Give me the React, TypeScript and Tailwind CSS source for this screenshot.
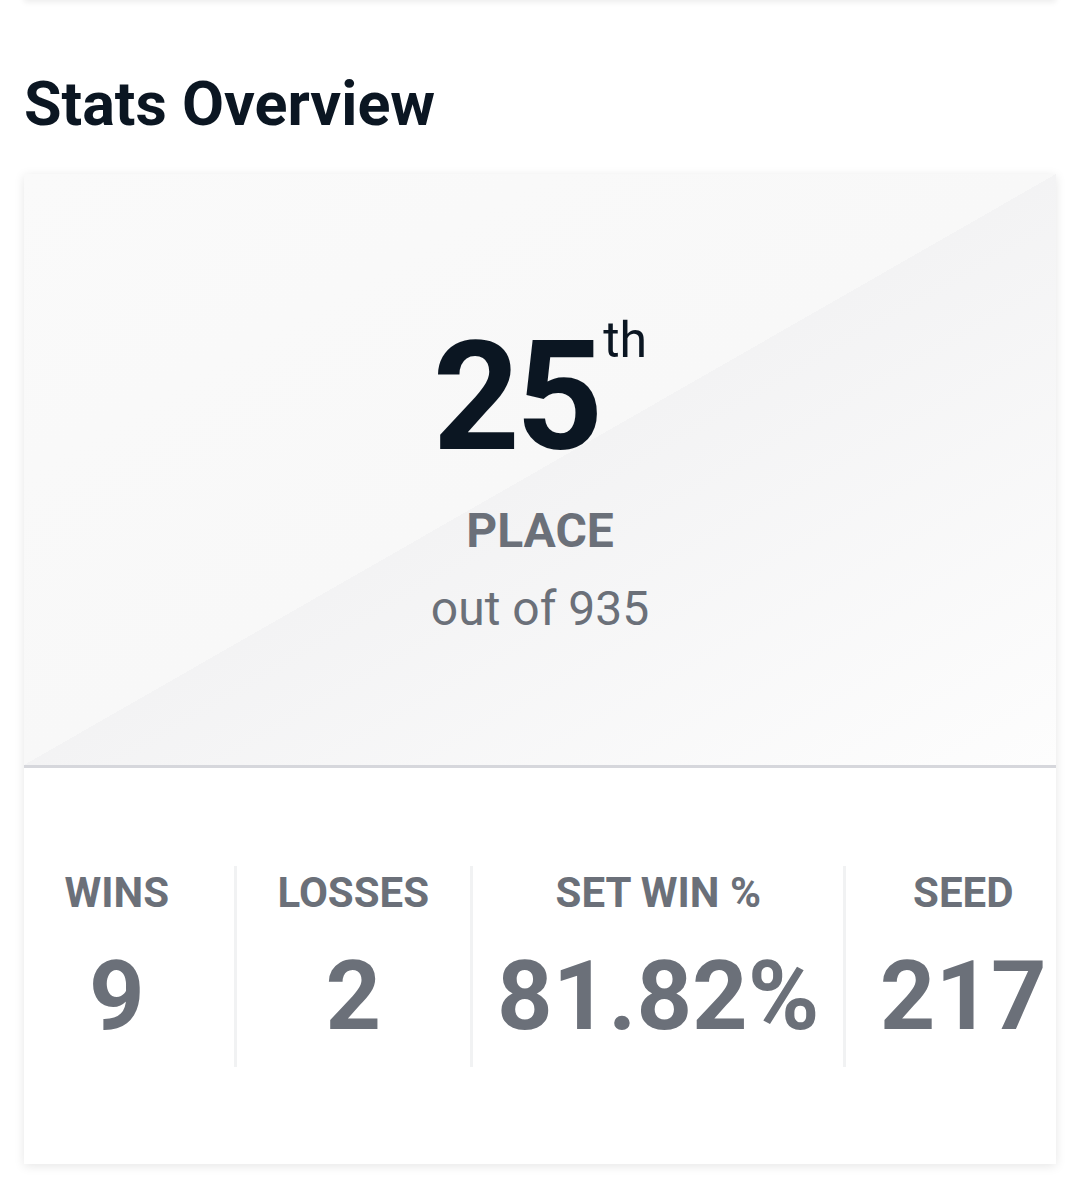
import React from "react";

const stats = [
  { label: "WINS", value: "9" },
  { label: "LOSSES", value: "2" },
  { label: "SET WIN %", value: "81.82%" },
  { label: "SEED", value: "217" },
];

export default function App() {
  return (
    <div className="min-h-[1195px] bg-white px-6 pb-[30px] font-['Roboto',sans-serif]">
      <div className="-mt-[40px] h-[40px] bg-white shadow-[0_2px_6px_rgba(0,0,0,0.08)]" />
      <h2 className="mt-[68px] text-[61px] font-bold leading-[1.2] text-[#0b1622]">
        Stats Overview
      </h2>
      <div className="mt-[33px] bg-white shadow-[0_2px_10px_rgba(0,0,0,0.1)]">
        <div className="flex h-[594px] flex-col items-center justify-center border-b-[3px] border-[#d6d7dc] bg-[linear-gradient(to_bottom_right,#fafafa_0%,#f8f8f8_50%,#f3f3f4_50%,#fdfdfd_100%)]">
          <div className="flex items-start pt-[14px]">
            <span className="text-[152px] font-bold leading-none tracking-[-4px] text-[#0b1622]">25</span>
            <span className="mt-[-6px] ml-[4px] text-[50px] leading-none text-[#0b1622]">th</span>
          </div>
          <div className="mt-[34px] text-[48px] font-bold leading-none text-[#6b7079]">PLACE</div>
          <div className="mt-[30px] text-[48px] leading-none text-[#6b7079]">out of 935</div>
        </div>
        <div className="flex h-[396px] items-center">
          <div className="flex w-full items-stretch gap-6">
            {stats.map((s, i) => (
              <React.Fragment key={s.label}>
                {i > 0 && <div className="w-[3px] shrink-0 bg-[#f1f2f3]" />}
                <div className="flex flex-1 basis-0 flex-col items-center pt-[2px] pb-[12px]">
                  <div className="text-[42px] font-bold leading-[1.2] text-[#6b7079]">{s.label}</div>
                  <div className="mt-[20px] text-[97px] font-bold leading-[1.2] text-[#6b7079]">{s.value}</div>
                </div>
              </React.Fragment>
            ))}
          </div>
        </div>
      </div>
    </div>
  );
}
